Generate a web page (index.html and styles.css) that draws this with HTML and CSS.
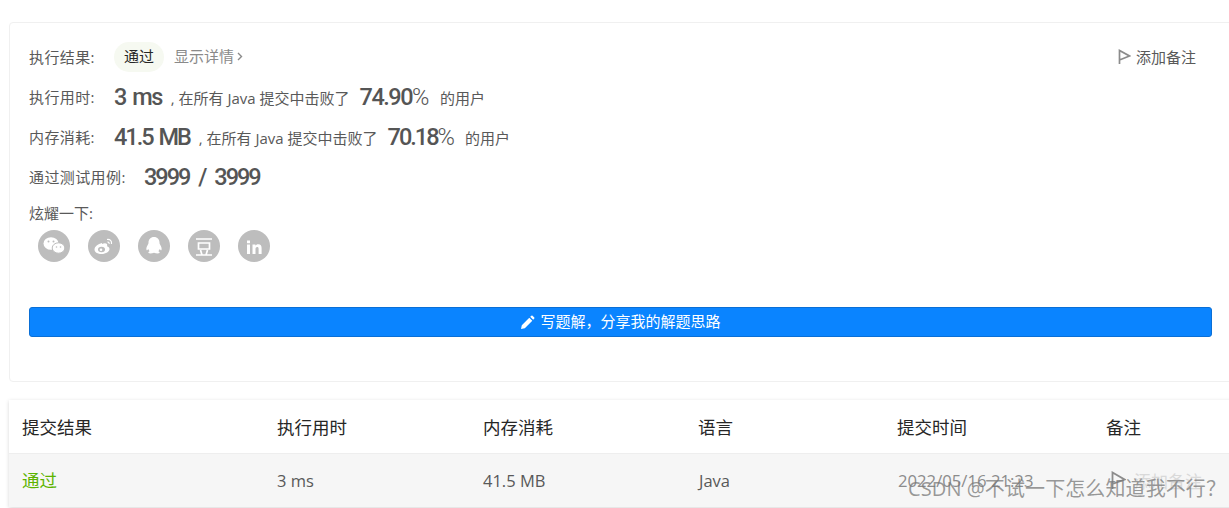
FILE: index.html
```html
<!DOCTYPE html>
<html lang="zh">
<head>
<meta charset="utf-8">
<title>提交结果</title>
<link rel="stylesheet" href="styles.css">
</head>
<body>
<section class="card">
  <div class="row row-result">
    <span class="label">执行结果:</span>
    <a class="pill">通过</a>
    <a class="details">显示详情 <svg class="chev" width="6" height="9" viewBox="0 0 6 9"><path d="M1 1l3.500 3.500L1 8" fill="none" stroke="#8a8a8a" stroke-width="1.400"/></svg></a>
    <a class="note"><svg class="flag" width="13" height="16" viewBox="0 0 13 16"><path d="M1.500 15V1.500L11.500 7 1.500 11" fill="none" stroke="#8c8c8c" stroke-width="1.700"/></svg>添加备注</a>
  </div>
  <div class="row row-stat">
    <span class="label">执行用时:</span>
    <b class="big">3 ms</b>
    <span class="txt">, 在所有 Java 提交中击败了</span>
    <b class="big pct">74.90<i>%</i></b>
    <span class="txt">的用户</span>
  </div>
  <div class="row row-stat">
    <span class="label">内存消耗:</span>
    <b class="big tight">41.5 MB</b>
    <span class="txt">, 在所有 Java 提交中击败了</span>
    <b class="big pct tight">70.18<i>%</i></b>
    <span class="txt">的用户</span>
  </div>
  <div class="row row-stat">
    <span class="label label-long">通过测试用例:</span>
    <b class="big wide">3999 / 3999</b>
  </div>
  <div class="share-label">炫耀一下:</div>
  <div class="shares">
    <span class="share"><svg viewBox="0 0 32 32" width="32" height="32"><ellipse cx="13" cy="13.500" rx="7.500" ry="6.300" fill="#fff"/><ellipse cx="20.500" cy="18" rx="6.300" ry="5.200" fill="#fff" stroke="#bdbdbd" stroke-width="1"/><circle cx="10.500" cy="11.500" r="1" fill="#bdbdbd"/><circle cx="15.500" cy="11.500" r="1" fill="#bdbdbd"/><circle cx="18.500" cy="17" r=".8" fill="#bdbdbd"/><circle cx="22.500" cy="17" r=".8" fill="#bdbdbd"/></svg></span>
    <span class="share"><svg viewBox="0 0 32 32" width="32" height="32"><path d="M14 13c-4 1-7.500 3.500-7.500 6.500 0 3 3.500 4.500 7 4.500 4.500 0 8-2.500 8-5 0-2-2-2.500-2.500-2.800.8-2-.3-3-2-3-1 0-2 .3-3 .8z" fill="#fff"/><ellipse cx="13.500" cy="19.500" rx="3.500" ry="2.700" fill="#bdbdbd"/><circle cx="13" cy="19.700" r="1.300" fill="#fff"/><path d="M19 9.500c3-.5 5 1.500 4.500 4.500M19.500 12.200c1.300-.2 1.800.5 1.600 1.700" fill="none" stroke="#fff" stroke-width="1.200"/></svg></span>
    <span class="share"><svg viewBox="0 0 32 32" width="32" height="32"><path d="M16 7c-3.500 0-5.500 2.500-5.500 5.500 0 1-.2 1.500-.8 2.500-1 1.500-1.700 3.500-1.200 5 .5.800 1.200-.2 1.800-1 .3 1 .8 1.700 1.400 2.300-1 .4-1.700 1-1.200 1.700.7.700 3.500.6 5.500-.2 2 .8 4.800.9 5.500.2.500-.7-.2-1.300-1.200-1.700.6-.6 1.100-1.300 1.400-2.300.6.800 1.300 1.800 1.800 1 .5-1.500-.2-3.500-1.200-5-.6-1-.8-1.500-.8-2.500C21.500 9.500 19.500 7 16 7z" fill="#fff"/></svg></span>
    <span class="share"><svg viewBox="0 0 32 32" width="32" height="32"><path d="M8 9h16M10.500 13h11v6h-11zM8 25h16M12.500 20l1.500 5M19.500 20L18 25" fill="none" stroke="#fff" stroke-width="1.700"/></svg></span>
    <span class="share"><svg viewBox="0 0 32 32" width="32" height="32"><path d="M9 14.500h3V24H9zM9 10.500h3v2.700H9zM14.500 14.500h2.900v1.300c.6-1 1.600-1.500 2.900-1.500 2.400 0 3.300 1.500 3.300 3.800V24h-3v-5.200c0-1.100-.4-1.700-1.400-1.700s-1.700.8-1.700 1.900v5h-3z" fill="#fff"/></svg></span>
  </div>
  <a class="write"><svg width="15" height="15" viewBox="0 0 15 15"><path d="M1 14l.8-3.800 7.500-7.500 3 3-7.500 7.500zM10.200 1.800l1.200-1.100c.4-.3.800-.3 1.100 0l1.800 1.800c.3.300.3.700 0 1.100l-1.100 1.200z" fill="#fff"/></svg><span class="write-text">写题解，分享我的解题思路</span></a>
</section>

<section class="table">
  <div class="tr thead">
    <span class="c1">提交结果</span>
    <span class="c2">执行用时</span>
    <span class="c3">内存消耗</span>
    <span class="c4">语言</span>
    <span class="c5">提交时间</span>
    <span class="c6">备注</span>
  </div>
  <div class="tr tbody">
    <a class="c1 ok">通过</a>
    <span class="c2">3 ms</span>
    <span class="c3">41.5 MB</span>
    <span class="c4 lang">Java</span>
    <span class="c5 time">2022/05/16 21:23</span>
    <span class="c6 addnote"><svg width="15" height="19" viewBox="0 0 15 19"><path d="M1.500 18V1.500L13.500 8.500 1.500 13" fill="none" stroke="#8c8c8c" stroke-width="1.800"/></svg><em>添加备注</em></span>
  </div>
</section>
<div class="watermark">CSDN @不试一下怎么知道我不行？</div>
</body>
</html>
```
FILE: styles.css
```css
* { box-sizing: border-box; }
html, body { margin: 0; padding: 0; }
body {
  width: 1229px;
  height: 508px;
  overflow: hidden;
  position: relative;
  background: #fff;
  padding: 22px 0 0 9px;
  font-family: "Open Sans", "Noto Sans CJK SC", sans-serif;
  color: #595959;
}
.card {
  width: 1240px;
  height: 360px;
  border: 1px solid #f0f0f0;
  border-radius: 4px;
  padding: 14px 0 0 19px;
  display: flex;
  flex-direction: column;
}
.row { display: flex; align-items: center; height: 40px; font-size: 15px; width: 1167px; }
.label { width: 85px; flex: none; font-size: 15px; line-height: 20px; color: #595959; letter-spacing: .4px; }
.label-long { width: 115px; }
.pill {
  background: #f6f9f1;
  border-radius: 15px;
  height: 30px;
  width: 50px;
  line-height: 28px;
  text-align: center;
  color: #262626;
  font-size: 15px;
}
.details { margin-left: 10px; font-size: 15px; line-height: 20px; padding-bottom: 2px; color: #8a8a8a; display: flex; align-items: center; gap: 3px; }
.note { margin-left: auto; display: flex; align-items: center; gap: 5px; font-size: 15px; line-height: 20px; padding-bottom: 1px; color: #595959; }
.big {
  font-family: "Roboto", sans-serif;
  font-weight: 500;
  font-size: 23.500px;
  letter-spacing: -1.500px;
  word-spacing: 2px;
  color: #555;
  flex: none;
}
.big i { font-style: normal; font-weight: 300; }
.tight { letter-spacing: -2px; }
.txt { font-size: 15px; margin-left: 9px; }
.pct { margin-left: 10px; }
.pct + .txt { margin-left: 12px; }
.wide { letter-spacing: -2px; word-spacing: 5px; }
.share-label { font-size: 15px; margin-top: 6px; line-height: 20px; }
.shares { display: flex; gap: 18px; padding-left: 9px; margin-top: 7px; }
.share { width: 32px; height: 32px; border-radius: 50%; background: #bdbdbd; display: block; }
.share svg { display: block; }
.write {
  margin-top: 45px;
  width: 1183px;
  height: 30px;
  background: #0a84ff;
  border: 1px solid #0a6fd6;
  border-radius: 3px;
  color: #fff;
  font-size: 15px;
  display: flex;
  align-items: center;
  justify-content: center;
  gap: 5px;
}
.write-text { line-height: 20px; padding-bottom: 3px; }
.table {
  margin-top: 18px;
  width: 1240px;
  box-shadow: 0 1px 4px rgba(0,0,0,.16);
}
.tr { display: flex; align-items: center; padding-left: 13px; }
.thead { height: 54px; font-size: 17.500px; color: #262626; background: #fff; border-bottom: 1px solid #eee; }
.tbody { height: 53px; font-size: 16.500px; color: #595959; background: #f6f6f6; }
.c1 { width: 255px; }
.c2 { width: 206px; }
.c3 { width: 215px; }
.c4 { width: 199px; }
.c5 { width: 209px; }
.c6 { width: 120px; }
.ok { color: #5cb300; font-size: 17.500px; line-height: 24px; padding-bottom: 2px; }
.lang { padding-left: 1px; }
.time { color: #8c8c8c; font-size: 16.700px; padding-left: 1px; }
.addnote { display: flex; align-items: center; gap: 8px; padding-left: 5px; }
.addnote em { font-style: normal; color: #d9d9d9; font-size: 17px; }
.watermark {
  position: absolute;
  left: 908px;
  top: 476px;
  font-size: 20px;
  line-height: 25px;
  letter-spacing: .1px;
  color: rgba(120,120,120,.75);
  white-space: nowrap;
}
```
